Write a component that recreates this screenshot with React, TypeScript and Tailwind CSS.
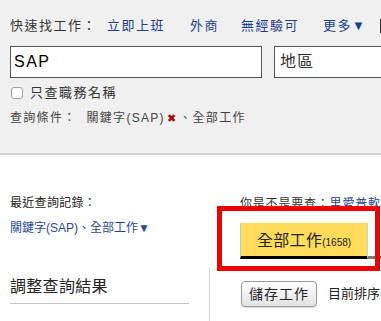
import React from 'react';

const font = { fontFamily: '"Liberation Sans", "Noto Sans CJK TC", sans-serif' };

export default function App() {
  return (
    <div className="relative w-[381px] h-[321px] overflow-hidden bg-white text-[#333]" style={font}>
      {/* search bar area */}
      <div className="h-[155px] bg-[#f0f0f0] border-b-2 border-[#cfcfcf] pl-[10px] pt-[18px]">
        <div className="flex items-center h-[16px] text-[13px] leading-[16px] tracking-[1.5px] whitespace-nowrap">
          <span className="text-[#333]">快速找工作：</span>
          <a className="ml-[10px] text-[#1b3d8f]">立即上班</a>
          <a className="ml-[25px] text-[#1b3d8f]">外商</a>
          <a className="ml-[22px] text-[#1b3d8f]">無經驗可</a>
          <a className="ml-[24px] text-[#1b3d8f]">更多▼</a>
          <span className="ml-[14px] w-[2px] h-[14px] bg-[#333] shrink-0" />
        </div>
        <div className="flex mt-[12px]">
          <div className="w-[252px] h-[32px] border border-[#555] bg-white pl-[3px] flex items-center text-[16px] tracking-[1.5px] text-black shrink-0">
            SAP
          </div>
          <div className="ml-[12px] w-[150px] h-[32px] border border-[#555] bg-white pl-[5px] flex items-center text-[16px] tracking-[1px] text-[#333] shrink-0">
            地區
          </div>
        </div>
        <div className="flex items-center mt-[7px] h-[16px]">
          <span className="ml-[1px] w-[12px] h-[12px] rounded-[3px] border border-[#a0a0a0] bg-white" />
          <span className="ml-[7px] text-[13px] leading-[16px] tracking-[1.5px] text-[#333]">只查職務名稱</span>
        </div>
        <div className="flex items-center mt-[9px] h-[16px] text-[12px] leading-[16px] tracking-[1.3px] text-[#444] whitespace-nowrap">
          <span>查詢條件：</span>
          <span className="ml-[10px]">關鍵字(SAP)</span>
          <span className="ml-[2px] text-[#a00] text-[11px]">✖</span>
          <span className="ml-[2px]">、全部工作</span>
        </div>
      </div>

      {/* results area */}
      <div className="flex">
        <div className="w-[209px] shrink-0 pl-[10px] pr-[20px] pt-[40px]">
          <div className="text-[12px] leading-[16px] tracking-[0.3px] text-[#222]">最近查詢記錄：</div>
          <a className="block mt-[9px] text-[12px] leading-[16px] text-[#1f4a9c] whitespace-nowrap">關鍵字(SAP)、全部工作▼</a>
          <div className="mt-[40px] pb-[5px] border-b border-[#c4c4c4] text-[16px] leading-[22px] tracking-[0.3px] text-[#222]">
            調整查詢結果
          </div>
        </div>
        <div className="flex-1 min-w-0 pt-[41px]">
          <div className="pl-[31px] text-[12px] leading-[16px] tracking-[0.8px] whitespace-nowrap text-[#333]">
            你是不是要查：<a className="text-[#1b3d8f]">里愛普軟體</a>
          </div>
          <div className="flex mt-[11px] pl-[31px]">
            <div className="h-[36px] px-[16px] pt-[2px] bg-[#ffdc5a] border-l border-[#c8c8c8] border-b-[3px] border-b-black flex items-center whitespace-nowrap text-[#222]">
              <span className="text-[16px] tracking-[0.3px]">全部工作</span>
              <span className="text-[10px] mt-[4px]">(1658)</span>
            </div>
            <div className="flex-1 border-l border-[#d0d0d0] border-b-[3px] border-b-[#777]" />
          </div>
          <div className="mt-[9px] border-l border-[#d6d6d6] pl-[31px] pt-[13px] h-[60px] flex items-start">
            <button className="w-[76px] h-[26px] rounded-[4px] border border-[#999] bg-gradient-to-b from-white to-[#e2e2e2] shadow-[0_1px_1px_rgba(0,0,0,0.15)] text-[14px] tracking-[1px] text-[#222] shrink-0">
              儲存工作
            </button>
            <span className="ml-[11px] mt-[5px] text-[13px] leading-[16px] whitespace-nowrap text-[#222]">目前排序：</span>
          </div>
        </div>
      </div>

      {/* highlight annotation */}
      <div className="absolute left-[217px] top-[206px] w-[163px] h-[65px] border-[5px] border-[#ee0000]" />
    </div>
  );
}
